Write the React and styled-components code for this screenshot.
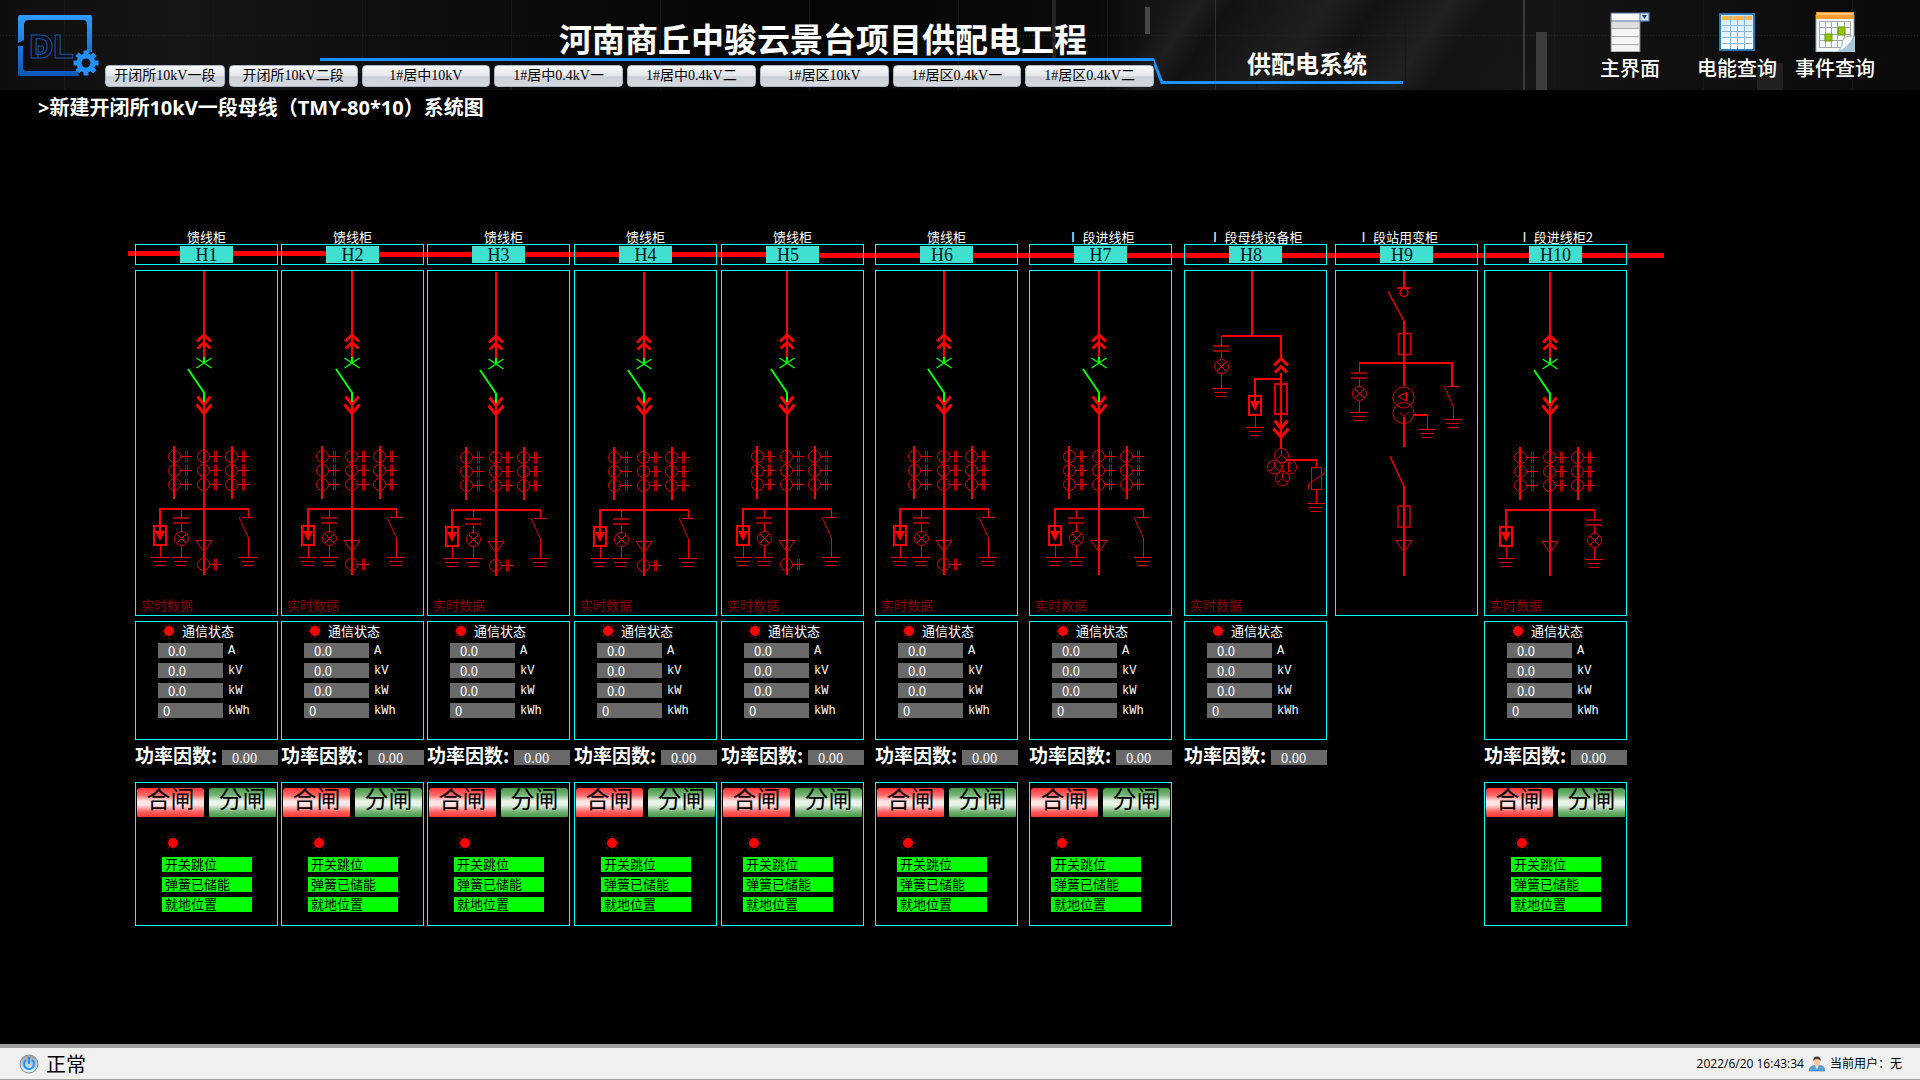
import React from "react";
import styled, { createGlobalStyle } from "styled-components";

const SANS = '"Noto Sans CJK SC", sans-serif';
const SONG = '"Liberation Serif", "Noto Sans CJK SC", serif';
const MONO = '"Liberation Mono", "Noto Sans CJK SC", monospace';
const CYAN = "#00ffff";
const RED = "#ff0000";
const DARK = "#dc0000";
const DIM = "#a00000";
const BLUE = "#1e90ff";

const GlobalStyle = createGlobalStyle`
  *, *::before, *::after { box-sizing: border-box; }
  body { margin: 0; background: #000; color: #fff; font-family: ${SANS}; }
  button { font: inherit; margin: 0; padding: 0; border: 0; cursor: pointer; }
  svg { display: block; flex: none; }
`;

const Page = styled.div`
  min-height: 100vh;
  display: flex;
  flex-direction: column;
  background: #000;
`;

/* ---------- header ---------- */

const Header = styled.header`
  height: 90px;
  flex: none;
  display: flex;
  align-items: flex-start;
  padding: 0 45px 0 18px;
  background:
    linear-gradient(#3c3c3c, #3c3c3c) 1536px 32px / 11px 58px no-repeat,
    linear-gradient(#202020, #202020) 1757px 63px / 26px 27px no-repeat,
    linear-gradient(#484848, #484848) 1145px 7px / 5px 27px no-repeat,
    linear-gradient(#242424, #242424) 1052px 0 / 4px 58px no-repeat,
    linear-gradient(#303030, #303030) 1215px 0 / 1px 90px no-repeat,
    linear-gradient(#3a3a3a, #3a3a3a) 1523px 0 / 2px 90px no-repeat,
    repeating-linear-gradient(90deg, #242424 0 1px, transparent 1px 3px) 0 35px / 100% 1px no-repeat,
    repeating-linear-gradient(90deg, transparent 0 64px, #181818 64px 65px, transparent 65px 149px),
    linear-gradient(125deg, transparent 960px, #1e1e1e 985px, #121212 1010px, #1f1f1f 1090px, #131313 1130px, #202020 1190px, #141414 1220px, transparent 1300px),
    linear-gradient(90deg, #0d0d0d 0, #161616 180px, #0e0e0e 420px, #050505 800px, #0b0b0b 1100px, #191919 1180px, #171717 1500px, #111111 1640px, #0a0a0a 100%);
`;

const LogoSlot = styled.div`
  padding: 15px 6px 0 0;
`;

const HeaderMain = styled.div`
  flex: 0 1 1049px;
`;

const TitleBar = styled.div`
  height: 61px;
  margin-left: 215px;
  padding-left: 239px;
  display: flex;
  align-items: flex-end;
  border-bottom: 3px solid ${BLUE};
`;

const Title = styled.h1`
  margin: 0;
  font-size: 33px;
  line-height: 40px;
  font-weight: 700;
  white-space: nowrap;
`;

const Nav = styled.nav`
  display: flex;
  gap: 4px;
  padding-top: 4px;
`;

const NavButton = styled.button`
  flex: 1 1 ${(p) => (p.$short ? 120 : 129)}px;
  height: 22px;
  border-radius: 4px;
  border: 1px solid #a9b8c8;
  background: linear-gradient(#f7f9fa 0%, #e4e8ec 48%, #cbd0d7 54%, #d5d9df 100%);
  color: #000;
  && {
    font-family: ${SONG};
    font-size: 14px;
    line-height: 18px;
  }
  white-space: nowrap;
`;

const SystemBlock = styled.div`
  flex: 0 0 239px;
  height: 84px;
  padding-left: 83px;
  display: flex;
  align-items: flex-end;
  border-bottom: 3px solid ${BLUE};
`;

const SystemName = styled.h2`
  margin: 0;
  font-size: 24px;
  line-height: 36px;
  font-weight: 700;
  white-space: nowrap;
`;

const Shortcuts = styled.div`
  margin-left: auto;
  padding-top: 12px;
  display: flex;
  gap: 18px;
`;

const Shortcut = styled.a`
  width: ${(p) => p.$width}px;
  display: flex;
  flex-direction: column;
  align-items: center;
  gap: 4px;
  color: #fff;
  text-decoration: none;
  font-size: 20px;
  line-height: 24px;
  font-weight: 500;
  white-space: nowrap;
`;

const Subtitle = styled.h3`
  margin: 0;
  padding-left: 38px;
  font-family: "Open Sans", ${SANS};
  font-size: 20px;
  line-height: 36px;
  font-weight: 700;
`;

/* ---------- switchgear board ---------- */

const Board = styled.main`
  position: relative;
  margin: 104px 293px 40px 135px;
  display: flex;
  align-items: flex-start;
`;

const Bus = styled.div`
  position: absolute;
  top: 21px;
  left: -7px;
  right: -37px;
  display: flex;
`;

const BusSection = styled.div`
  flex: ${(p) => p.$share} 1 0;
  height: 5px;
  margin-top: ${(p) => p.$drop}px;
  background: ${RED};
`;

const Cabinet = styled.section`
  position: relative;
  flex: 1 0 143px;
  margin-left: ${(p) => p.$gap}px;
  display: flex;
  flex-direction: column;
`;

const LABEL_PADDING = { left: "0 18px 0 0", right: "0 0 0 10px" };

const CabinetLabel = styled.div`
  padding: ${(p) => LABEL_PADDING[p.$lean] || 0};
  text-align: center;
  font-size: 13px;
  line-height: 14px;
  white-space: nowrap;
`;

const CabinetHead = styled.div`
  height: 21px;
  display: flex;
  justify-content: center;
  align-items: center;
  border: 1px solid ${CYAN};
`;

const Tag = styled.div`
  width: 53px;
  height: 17px;
  padding-left: ${(p) => (p.$start ? 11 : 0)}px;
  text-align: ${(p) => (p.$start ? "left" : "center")};
  background: #40e0d0;
  color: #001018;
  font-family: ${SONG};
  font-size: 18px;
  line-height: 18px;
`;

const Panel = styled.div`
  height: ${(p) => p.$height}px;
  margin-top: ${(p) => p.$space || 0}px;
  border: 1px solid ${CYAN};
  display: flex;
  flex-direction: column;
`;

const Diagram = styled.svg`
  align-self: center;
`;

const LiveLabel = styled.div`
  padding-left: 5px;
  color: #8b0000;
  font-size: 13px;
  line-height: 16px;
`;

const LinkState = styled.div`
  height: 18px;
  padding-left: 26px;
  display: flex;
  align-items: center;
  gap: 6px;
  font-size: 13px;
  line-height: 18px;
`;

const Readings = styled.div`
  padding: 3px 0 0 22px;
  display: grid;
  gap: 5px;
`;

const Reading = styled.label`
  display: flex;
  align-items: flex-start;
  gap: 5px;
  height: 15px;
  font-family: ${MONO};
  font-size: 12px;
  line-height: 17px;
`;

const Value = styled.output`
  width: ${(p) => p.$width}px;
  height: 15px;
  padding-left: ${(p) => p.$pad}px;
  background: #696969;
  color: #fff;
  font-family: ${SANS};
  font-size: 13px;
  font-weight: 400;
  line-height: 15px;
`;

const FactorRow = styled.label`
  height: 42px;
  padding: 4px 0 17px;
  display: flex;
  align-items: flex-end;
  justify-content: space-between;
  font-size: 19px;
  line-height: 21px;
  font-weight: 700;
  white-space: nowrap;
`;

const SwitchButtons = styled.div`
  padding-top: 5px;
  display: flex;
  justify-content: center;
  gap: 5px;
`;

const SwitchButton = styled.button`
  width: 67px;
  height: 29px;
  && { padding-bottom: 9px; }
  border-radius: 3px 3px 1px 1px;
  background: ${(p) =>
    p.$on
      ? "linear-gradient(#ff3434, #ff6a6a 25%, #ffe6e6 45%, #ffe6e6 58%, #ff6060 82%, #ff3434)"
      : "linear-gradient(#459a45, #7ab67a 25%, #e9f4e9 45%, #e9f4e9 58%, #74b274 82%, #459a45)"};
  color: #000;
  && {
    font-size: 24px;
    line-height: 20px;
  }
`;

const Signals = styled.div`
  padding: 19px 0 0 ${(p) => (p.$tight ? 21 : 26)}px;
  display: grid;
  gap: 5px;
`;

const SignalLamp = styled.div`
  padding: 0 0 2px 4px;
`;

const Signal = styled.div`
  width: 90px;
  height: 15px;
  padding-left: 3px;
  background: #00ff00;
  color: #000;
  font-size: 13px;
  line-height: 13px;
`;

/* ---------- status bar ---------- */

const StatusBar = styled.footer`
  height: 36px;
  flex: none;
  margin-top: auto;
  padding: 0 18px 0 19px;
  display: flex;
  align-items: center;
  justify-content: space-between;
  background: #f0f0f0;
  border-top: 4px solid #a0a0a0;
  border-bottom: 1px solid #a0a0a0;
  color: #000;
`;

const SystemState = styled.div`
  display: flex;
  align-items: center;
  gap: 7px;
  font-size: 20px;
  line-height: 28px;
`;

const Session = styled.div`
  display: flex;
  align-items: center;
  gap: 5px;
  font-family: "Open Sans", ${SANS};
  font-size: 12px;
  line-height: 16px;
`;

/* ---------- drawings ---------- */

const Logo = () => (
  <svg width="81" height="62" viewBox="0 0 81 62" role="img" aria-label="DL">
    <defs>
      <linearGradient id="logoBlue" x1="0" y1="0" x2="0" y2="1">
        <stop offset="0" stopColor="#2f9bff" />
        <stop offset="1" stopColor="#0b58b8" />
      </linearGradient>
    </defs>
    <path
      fill="url(#logoBlue)"
      d="M2 0H72Q74 0 74 2V37Q71 37 69 40V9Q69 5 65 5H11Q6 5 6 10V25L0 28V2Q0 0 2 0ZM0 31H5V53Q5 56 9 56H59L61 61H2Q0 61 0 59Z"
    />
    <g fill="none" stroke="#1156ad" fontFamily="Liberation Sans, sans-serif" fontWeight="700" fontSize="34">
      <text x="11" y="43">D</text>
      <text x="35" y="43">L</text>
    </g>
    <path d="M20 43V31H25Q27 34 24 37H20" fill="none" stroke="#1156ad" />
    <g transform="translate(68 48)" fill="none" stroke="#2490fb">
      <circle r="7" strokeWidth="5" />
      {[0, 45, 90, 135, 180, 225, 270, 315].map((a) => (
        <path key={a} d="M0 -8V-12.5" strokeWidth="5" transform={`rotate(${a})`} />
      ))}
    </g>
  </svg>
);

const HomeIcon = () => (
  <svg width="40" height="40" viewBox="0 0 40 40">
    <rect x="1" y="4" width="29" height="36" fill="#f4f4f4" stroke="#7a7a7a" />
    <rect x="2" y="10" width="27" height="6" fill="#dedede" />
    <path d="M1 16.500H30M1 24.500H30M1 32.500H30" stroke="#a9a9a9" />
    <rect x="1" y="1" width="38" height="8" fill="#fafafa" stroke="#4d6c99" />
    <rect x="30" y="1" width="9" height="8" fill="#cfe0f3" stroke="#4d6c99" />
    <path d="M32 3H37L34.500 7Z" fill="#1d3d66" />
  </svg>
);

const EnergyIcon = () => (
  <svg width="38" height="40" viewBox="0 0 38 40">
    <defs>
      <linearGradient id="energySky" x1="0" y1="0" x2="0" y2="1">
        <stop offset="0" stopColor="#c8e9fb" />
        <stop offset="1" stopColor="#fff" />
      </linearGradient>
    </defs>
    <rect x="2" y="2" width="34" height="36" fill="url(#energySky)" stroke="#2c79b4" strokeWidth="2" />
    <rect x="4" y="4" width="30" height="4" fill="#ffb347" />
    <path d="M4 13.500H34M4 19.500H34M4 25.500H34M4 31.500H34M12.500 4V37M19.500 4V37M26.500 4V37" stroke="#8ab6d8" />
  </svg>
);

const EventIcon = () => (
  <svg width="40" height="40" viewBox="0 0 40 40">
    <rect x="1" y="3" width="38" height="37" fill="#f5fafc" stroke="#83a9bf" />
    <rect x="1" y="0" width="38" height="7" fill="#ff9a2e" />
    <rect x="2" y="1" width="36" height="2" fill="#ffc27a" />
    <path d="M4.500 9V36M10.500 9V36M16.500 9V36M22.500 9V36M29.500 9V36M35.500 9V28M4 9.500H36M4 15.500H36M4 22.500H36M4 28.500H34M4 35.500H26" stroke="#a8a8a8" />
    <rect x="10" y="22" width="7" height="7" fill="#8fc400" stroke="#6b9a00" />
    <rect x="23" y="15" width="7" height="8" fill="#8fc400" stroke="#6b9a00" />
    <path d="M40 24L24 40H40Z" fill="#a9c7dc" />
    <path d="M39 24Q28 24 28 28Q28 34 23 40Q34 36 39 24Z" fill="#fff" stroke="#9dbbd0" />
  </svg>
);

const Slant = () => (
  <svg width="10" height="84" viewBox="0 0 10 84">
    <path d="M-2 58H0L9 81H10V84H7L-2 61Z" fill={BLUE} />
  </svg>
);

const PowerIcon = () => (
  <svg width="20" height="20" viewBox="0 0 20 20">
    <defs>
      <linearGradient id="powerRim" x1="0" y1="0" x2="0" y2="1">
        <stop offset="0" stopColor="#9b9b9b" />
        <stop offset="1" stopColor="#e4fbff" />
      </linearGradient>
    </defs>
    <circle cx="10" cy="10" r="9" fill="url(#powerRim)" stroke="#808b92" />
    <path d="M7 6A5 5 0 1 0 13 6M10 3V10" fill="none" stroke="#1e8fff" strokeWidth="2" />
  </svg>
);

const UserIcon = () => (
  <svg width="16" height="16" viewBox="0 0 16 16">
    <path d="M0 15Q0 10 5 9.500H11Q16 10 16 15Z" fill="#5a9fdc" stroke="#2f6ea8" strokeWidth="0.500" />
    <path d="M6 9.500L8 13L10 9.500Z" fill="#fff" />
    <ellipse cx="8" cy="5.500" rx="3.200" ry="4.200" fill="#f4c79a" />
    <path d="M4.300 5Q4 0.500 8 0.500Q12 0.500 11.700 5Q10.500 3 8 3Q5.500 3 4.300 5Z" fill="#4b3a30" />
  </svg>
);

const Lamp = () => (
  <svg width="14" height="14" viewBox="-7 -7 14 14">
    {[0, 45, 90, 135, 180, 225, 270, 315].map((a) => (
      <path key={a} d="M0 -6V-7.500" stroke="#a00000" strokeWidth="1" transform={`rotate(${a})`} />
    ))}
    <circle r="5" fill={RED} />
  </svg>
);

const Wire = ({ d }) => <path d={d} fill="none" stroke={RED} strokeWidth="2" />;
const Thin = ({ d }) => <path d={d} fill="none" stroke="#f00000" strokeWidth="1" />;
const Chevron = ({ d }) => <path d={d} fill="none" stroke={RED} strokeWidth="3" />;

const Ground = ({ x, y }) => (
  <g strokeWidth="1">
    <path d={`M${x - 9} ${y + 0.5}h18`} stroke="#f00000" />
    <path d={`M${x - 6.5} ${y + 4.5}h13M${x - 5} ${y + 8.5}h10`} stroke={DARK} />
  </g>
);

const CT = ({ x, y }) => (
  <g fill="none">
    <circle cx={x - 0.5} cy={y} r="6" stroke={DARK} />
    <path d={`M${x + 6} ${y}h11`} stroke={RED} />
    <path d={`M${x + 10.5} ${y - 6}v12M${x + 12.5} ${y - 6}v12`} stroke="#c00000" />
  </g>
);

const Arrester = ({ x, y, end }) => (
  <g>
    <rect x={x - 6} y={y + 1} width="12" height="19" fill="none" stroke={RED} strokeWidth="2" />
    <path d={`M${x} ${y - 1}v8`} stroke={RED} strokeWidth="2" />
    <path d={`M${x - 5} ${y + 6}h10l-5 10z`} fill={RED} />
    <Thin d={`M${x + 0.5} ${y + 20}V${end}`} />
    <Ground x={x} y={end} />
  </g>
);

const Indicator = ({ x, y, end }) => (
  <g fill="none">
    <Thin d={`M${x + 0.5} ${y - 10}v9M${x + 0.5} ${y + 6}v8M${x + 0.5} ${y + 28}V${end}`} />
    <path d={`M${x - 8} ${y}h16M${x - 8} ${y + 5}h16`} stroke={DIM} strokeWidth="2" />
    <circle cx={x + 0.5} cy={y + 20.5} r="7" stroke={DARK} />
    <path d={`M${x - 4} ${y + 16}l9 9M${x + 5} ${y + 16}l-9 9`} stroke={RED} />
    <Ground x={x} y={end} />
  </g>
);

const EarthSwitch = ({ x, y, end }) => (
  <g>
    <Thin d={`M${x - 6} ${y + 0.5}h12M${x + 0.5} ${y + 21}V${end}`} />
    <path d={`M${x - 9} ${y}l9.500 21`} stroke={DARK} />
    <Ground x={x} y={end} />
  </g>
);

const CableEnd = () => <path d="M-8 270.500H8L0 282Z" fill="none" stroke={DARK} />;

const Breaker = () => (
  <g>
    <Wire d="M0 1V87M0 132V305" />
    <Chevron d="M-7 71.500L0 65L7 71.500M-6.500 78.500L0 72.500L6.500 78.500" />
    <Chevron d="M-6.500 126.500L0 134.500L6.500 126.500M-7.500 134.500L0 143.500L7.500 134.500" />
    <g fill="none" stroke="#00ff00" strokeWidth="1.500">
      <path d="M-7.500 88L7.500 98M7.500 88L-7.500 98" />
      <path d="M0 87V94M-16 99L0 122.500V132" strokeWidth="2" />
    </g>
  </g>
);

const Transformers = () => (
  <g>
    <Wire d="M-30 176V229M28 176V229" />
    {[-29, 0, 28].map((x) =>
      [186.5, 200.5, 214.5].map((y) => <CT key={`${x}:${y}`} x={x} y={y} />)
    )}
  </g>
);

const Feeder = ({ ringCT }) => (
  <g>
    <Breaker />
    <Transformers />
    <Wire d="M-44 256V239H45" />
    <Arrester x={-44} y={255} end={287} />
    <Indicator x={-23} y={248} end={287} />
    <Thin d="M44.500 239V247" />
    <EarthSwitch x={44} y={247} end={287} />
    <CableEnd />
    {ringCT && <CT x={0} y={294.5} />}
  </g>
);

const Incoming = () => (
  <g>
    <Breaker />
    <Transformers />
    <Wire d="M-44 256V239H45" />
    <Arrester x={-44} y={255} end={287} />
    <Indicator x={44} y={249} end={288} />
    <CableEnd />
  </g>
);

const BusEquipment = () => (
  <g>
    <Wire d="M0 1V66M-30 66H29V88M29 103V179M29 109H3V126" />
    <Indicator x={-31} y={76} end={118} />
    <Chevron d="M22 95.500L29 88.500L36 95.500M23 102.500L29 96.500L35 102.500" />
    <Arrester x={3} y={125} end={157} />
    <rect x="23" y="114" width="12" height="30" fill="none" stroke="#e00000" strokeWidth="2" />
    <Chevron d="M22.500 150.500L29 158.500L35.500 150.500M21.500 158.500L29 167.500L36.500 158.500" />
    <g fill="none" stroke={DARK}>
      <circle cx="29.500" cy="185.500" r="7" />
      <circle cx="22.500" cy="197" r="7" />
      <circle cx="37.500" cy="197" r="7" />
      <circle cx="30.500" cy="208.500" r="7" />
      <path d="M29.500 180V185L25 189M29.500 185L34 189M22.500 192V197L18 201M22.500 197L27 201M30.500 203V208L26 212M30.500 208L35 212M36.500 192V202L40 200M36.500 192L40 194" />
    </g>
    <Wire d="M34 190H65" />
    <Thin d="M64.500 190V198M64.500 219V233" />
    <rect x="59.500" y="197.500" width="10" height="22" fill="none" stroke="#e00000" />
    <path d="M56.500 219V214L73 203V198" fill="none" stroke={DARK} />
    <Ground x={64} y={233} />
  </g>
);

const StationTransformer = () => (
  <g>
    <Wire d="M0 1V18M0 51V116M-45 93H48V116M0 147V177M10 145H23M0 216V306" />
    <path d="M-6.500 18H6.500" stroke={DARK} strokeWidth="2" />
    <circle cx="0" cy="22.500" r="4" fill="none" stroke="#e00000" strokeWidth="1.500" />
    <path d="M-16 21.500L0 51M-14 186.500L0 216.500" stroke="#f00000" strokeWidth="1.500" />
    <g fill="none" stroke="#d00000" strokeWidth="1.500">
      <rect x="-5.500" y="63.500" width="12" height="21" />
      <rect x="-6" y="236" width="12" height="21" />
    </g>
    <Indicator x={-45} y={103} end={142} />
    <EarthSwitch x={49} y={116} end={149} />
    <g fill="none" stroke={DARK}>
      <circle cx="-0.500" cy="127.500" r="10.500" />
      <circle cx="-0.500" cy="143" r="10.500" />
      <path d="M-6 126.500L2.500 122.500V131Z" stroke={RED} />
      <path d="M-4.500 142L0 146.500L4.500 142" />
    </g>
    <CableEnd />
    <Thin d="M23.500 145V159" />
    <Ground x={23} y={159} />
  </g>
);

const SCHEMES = {
  feeder: <Feeder ringCT />,
  incomer: <Feeder />,
  bus: <BusEquipment />,
  station: <StationTransformer />,
  incoming: <Incoming />,
};

/* ---------- data ---------- */

const NAV = [
  "开闭所10kV一段",
  "开闭所10kV二段",
  "1#居中10kV",
  "1#居中0.4kV一",
  "1#居中0.4kV二",
  "1#居区10kV",
  "1#居区0.4kV一",
  "1#居区0.4kV二",
];

const CABINETS = [
  { id: "H1", name: "馈线柜", gap: 0, axis: 69, scheme: "feeder", meter: true, control: true },
  { id: "H2", name: "馈线柜", gap: 3, axis: 71, scheme: "feeder", meter: true, control: true },
  { id: "H3", name: "馈线柜", gap: 3, axis: 69, sink: 1, scheme: "feeder", meter: true, control: true, lean: "right" },
  { id: "H4", name: "馈线柜", gap: 4, axis: 70, sink: 1, scheme: "feeder", meter: true, control: true },
  { id: "H5", name: "馈线柜", gap: 4, axis: 66, scheme: "feeder", meter: true, control: true, start: true, tight: true },
  { id: "H6", name: "馈线柜", gap: 11, axis: 69, scheme: "feeder", meter: true, control: true, start: true, tight: true },
  { id: "H7", name: "Ⅰ 段进线柜", gap: 11, axis: 70, scheme: "incomer", meter: true, control: true, tight: true },
  { id: "H8", name: "Ⅰ 段母线设备柜", gap: 12, axis: 68, scheme: "bus", meter: true, start: true },
  { id: "H9", name: "Ⅰ 段站用变柜", gap: 8, axis: 69, scheme: "station", start: true, lean: "left" },
  { id: "H10", name: "Ⅰ 段进线柜2", gap: 6, axis: 66, sink: 1, scheme: "incoming", meter: true, control: true },
];

const READINGS = [
  { unit: "A", value: "0.0", pad: 10 },
  { unit: "kV", value: "0.0", pad: 10 },
  { unit: "kW", value: "0.0", pad: 10 },
  { unit: "kWh", value: "0", pad: 5 },
];

const SIGNALS = ["开关跳位", "弹簧已储能", "就地位置"];

const CabinetColumn = ({ cab }) => (
  <Cabinet $gap={cab.gap}>
    <CabinetLabel $lean={cab.lean}>{cab.name}</CabinetLabel>
    <CabinetHead>
      <Tag $start={cab.start}>{cab.id}</Tag>
    </CabinetHead>
    <Panel $height={346} $space={5}>
      <Diagram width="141" height="326" viewBox={`${1 - cab.axis} ${1 - (cab.sink || 0)} 141 326`}>
        {SCHEMES[cab.scheme]}
      </Diagram>
      {cab.meter && <LiveLabel>实时数据</LiveLabel>}
    </Panel>
    {cab.meter && (
      <>
        <Panel $height={119} $space={5}>
          <LinkState>
            <Lamp />
            通信状态
          </LinkState>
          <Readings>
            {READINGS.map((r) => (
              <Reading key={r.unit}>
                <Value $width={65} $pad={r.pad}>{r.value}</Value>
                {r.unit}
              </Reading>
            ))}
          </Readings>
        </Panel>
        <FactorRow>
          功率因数:
          <Value $width={56} $pad={10}>0.00</Value>
        </FactorRow>
      </>
    )}
    {cab.control && (
      <Panel $height={144}>
        <SwitchButtons>
          <SwitchButton type="button" $on>合闸</SwitchButton>
          <SwitchButton type="button">分闸</SwitchButton>
        </SwitchButtons>
        <Signals $tight={cab.tight}>
          <SignalLamp>
            <Lamp />
          </SignalLamp>
          {SIGNALS.map((s) => (
            <Signal key={s}>{s}</Signal>
          ))}
        </Signals>
      </Panel>
    )}
  </Cabinet>
);

export default function App() {
  return (
    <Page>
      <GlobalStyle />
      <Header>
        <LogoSlot>
          <Logo />
        </LogoSlot>
        <HeaderMain>
          <TitleBar>
            <Title>河南商丘中骏云景台项目供配电工程</Title>
          </TitleBar>
          <Nav>
            {NAV.map((n, i) => (
              <NavButton key={n} type="button" $short={i === 0}>{n}</NavButton>
            ))}
          </Nav>
        </HeaderMain>
        <Slant />
        <SystemBlock>
          <SystemName>供配电系统</SystemName>
        </SystemBlock>
        <Shortcuts>
          <Shortcut href="#home" $width={98}>
            <HomeIcon />
            主界面
          </Shortcut>
          <Shortcut href="#energy" $width={80}>
            <EnergyIcon />
            电能查询
          </Shortcut>
          <Shortcut href="#events" $width={80}>
            <EventIcon />
            事件查询
          </Shortcut>
        </Shortcuts>
      </Header>
      <Subtitle>&gt;新建开闭所10kV一段母线（TMY-80*10）系统图</Subtitle>
      <Board>
        <Bus>
          <BusSection $share={222} $drop={0} />
          <BusSection $share={440} $drop={1} />
          <BusSection $share={874} $drop={2} />
        </Bus>
        {CABINETS.map((cab) => (
          <CabinetColumn key={cab.id} cab={cab} />
        ))}
      </Board>
      <StatusBar>
        <SystemState>
          <PowerIcon />
          正常
        </SystemState>
        <Session>
          2022/6/20 16:43:34
          <UserIcon />
          当前用户：无
        </Session>
      </StatusBar>
    </Page>
  );
}
